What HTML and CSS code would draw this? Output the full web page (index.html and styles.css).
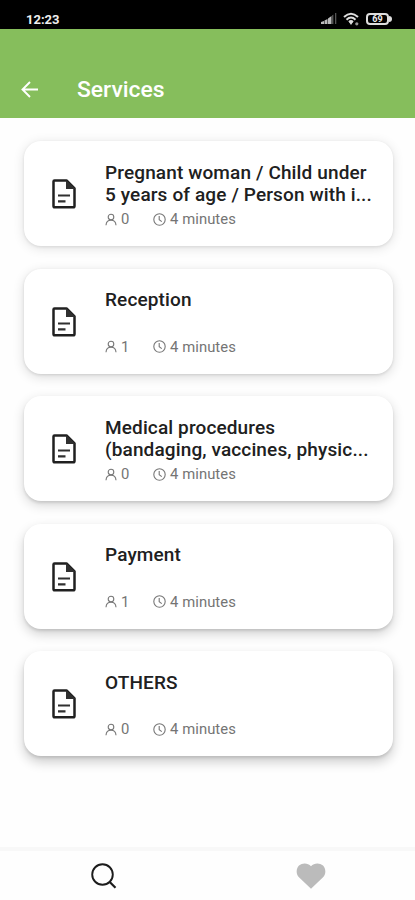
FILE: index.html
```html
<!DOCTYPE html>
<html lang="en">
<head>
<meta charset="utf-8">
<meta name="viewport" content="width=device-width, initial-scale=1">
<title>Services</title>
<link rel="stylesheet" href="styles.css">
</head>
<body>
<svg class="defs" aria-hidden="true">
  <symbol id="doc" viewBox="0 0 24 30">
    <path d="M2.5 1.5H14.5L22.5 9.5V27Q22.5 28.3 21.2 28.3H2.8Q1.5 28.3 1.5 27V2.5Q1.5 1.5 2.5 1.5Z" fill="none" stroke="#202020" stroke-width="2.5" stroke-linejoin="round"/>
    <path d="M14 1L23.5 10H14Z" fill="#303030"/>
    <path d="M6 16.5H18M6 22.3H13.5" stroke="#303030" stroke-width="2.2"/>
  </symbol>
  <symbol id="person" viewBox="0 0 12 13">
    <circle cx="6" cy="4" r="2.8"/>
    <path d="M1 12.2C1.2 9.2 3.2 7.3 6 7.3S10.8 9.2 11 12.2"/>
  </symbol>
  <symbol id="clock" viewBox="0 0 13 13">
    <circle cx="6.5" cy="6.5" r="5.7"/>
    <path d="M6.2 3V6.8L8.8 8.6"/>
  </symbol>
</svg>
<div class="status">
  <span class="time">12:23</span>
  <span class="indicators">
    <svg class="signal" viewBox="0 0 16 13"><path d="M0 12V10L3 9V12ZM3.5 12V8.5L6.5 7V12ZM7 12V6.5L10.5 4V12Z" fill="#bbb"/><path d="M11 12V3.5L12.4 2.5V12ZM14 12V1H15.3V12Z" fill="#555"/></svg>
    <svg class="wifi" viewBox="0 0 17 14"><path d="M1 5Q8 -1.5 15 5M3.5 7.7Q8 3.4 12.5 7.7M6 10Q8 8 10 10" fill="none" stroke="#ddd" stroke-width="2"/><path d="M6 10H10L8 13Z" fill="#ddd"/><circle cx="13.8" cy="11.8" r="1.6" fill="#999"/></svg>
    <span class="battery"><span class="level">69</span><i class="tip"></i></span>
  </span>
</div>
<header class="bar">
  <svg class="back" viewBox="0 0 18 17"><path d="M17 8.5H1.5M9 1L1.5 8.5L9 16" fill="none" stroke="#fff" stroke-width="1.9"/></svg>
  <h1>Services</h1>
</header>
<main class="list">
  <article class="card s1">
    <svg class="doc"><use href="#doc"/></svg>
    <div class="body"><h2>Pregnant woman / Child under<br>5 years of age / Person with i...</h2>
      <div class="meta"><svg class="person"><use href="#person"/></svg><span class="count">0</span><svg class="clock"><use href="#clock"/></svg><span>4 minutes</span></div></div>
  </article>
  <article class="card s2">
    <svg class="doc"><use href="#doc"/></svg>
    <div class="body"><h2>Reception</h2>
      <div class="meta"><svg class="person"><use href="#person"/></svg><span class="count">1</span><svg class="clock"><use href="#clock"/></svg><span>4 minutes</span></div></div>
  </article>
  <article class="card s3">
    <svg class="doc"><use href="#doc"/></svg>
    <div class="body"><h2>Medical procedures<br>(bandaging, vaccines, physic...</h2>
      <div class="meta"><svg class="person"><use href="#person"/></svg><span class="count">0</span><svg class="clock"><use href="#clock"/></svg><span>4 minutes</span></div></div>
  </article>
  <article class="card s4">
    <svg class="doc"><use href="#doc"/></svg>
    <div class="body"><h2>Payment</h2>
      <div class="meta"><svg class="person"><use href="#person"/></svg><span class="count">1</span><svg class="clock"><use href="#clock"/></svg><span>4 minutes</span></div></div>
  </article>
  <article class="card s5">
    <svg class="doc"><use href="#doc"/></svg>
    <div class="body"><h2>OTHERS</h2>
      <div class="meta"><svg class="person"><use href="#person"/></svg><span class="count">0</span><svg class="clock"><use href="#clock"/></svg><span>4 minutes</span></div></div>
  </article>
</main>
<nav class="tabs">
  <svg class="search" viewBox="0 0 26 26"><circle cx="11.5" cy="11.5" r="10.3" fill="none" stroke="#1c1c1c" stroke-width="1.9"/><path d="M18.5 18.8L24.5 24.8" stroke="#1c1c1c" stroke-width="2.2"/></svg>
  <svg class="heart" viewBox="0 0 30 26"><path d="M15 25.8L3.2 14.6C-.3 11.2 0 5.5 3 2.6C6.3-.5 11.8-.4 15 3.2C18.2-.4 23.7-.5 27 2.6C30 5.5 30.3 11.2 26.8 14.6Z" fill="#bbb"/></svg>
</nav>
</body>
</html>
```

FILE: styles.css
```css
* { box-sizing: border-box; }
body {
  margin: 0;
  height: 900px;
  display: flex;
  flex-direction: column;
  overflow: hidden;
  background: #fefefe;
  font-family: Roboto, "Liberation Sans", sans-serif;
  color: #202020;
}
svg { display: block; flex: none; }
.defs { display: none; }
.status {
  height: 29px;
  flex: none;
  display: flex;
  justify-content: space-between;
  padding: 12px 23px 0 26px;
  background: #000;
  color: #eee;
}
.time { font-size: 13px; line-height: 15px; font-weight: 700; }
.indicators { display: flex; gap: 6px; height: 14px; }
.signal { width: 16px; height: 13px; }
.wifi { width: 17px; height: 14px; }
.battery { display: flex; align-items: center; height: 13px; }
.level {
  width: 23px;
  height: 12px;
  border: 2px solid #ddd;
  border-radius: 4px;
  font-size: 9px;
  line-height: 9px;
  font-weight: 700;
  text-align: center;
}
.tip { width: 3px; height: 6px; border-radius: 0 3px 3px 0; background: #ddd; }
.bar {
  height: 89px;
  flex: none;
  display: flex;
  align-items: center;
  padding: 32px 21px 0;
  background: #86be5c;
}
.back { width: 18px; height: 17px; margin-right: 38px; }
h1 { margin: 1px 0 0; font-size: 22.9px; line-height: 28px; font-weight: 500; color: #fff; }
.list {
  flex: 1;
  display: flex;
  flex-direction: column;
  gap: 22.6px;
  padding: 23px 22.5px 0 23.5px;
}
.card {
  height: 105px;
  flex: none;
  display: flex;
  padding: 20.5px 0 0 28.5px;
  border-radius: 17px;
  background: #fff;
}
.s1 { box-shadow: 0 2px 12px rgba(0,0,0,.12), 0 1px 3px rgba(0,0,0,.09); }
.s2 { box-shadow: 0 3px 12px rgba(0,0,0,.14), 0 1px 3px rgba(0,0,0,.11); }
.s3 { box-shadow: 0 4px 12px rgba(0,0,0,.16), 0 2px 3px rgba(0,0,0,.11); }
.s4 { box-shadow: 0 5px 12px rgba(0,0,0,.18), 0 2px 3px rgba(0,0,0,.11); }
.s5 { box-shadow: 0 6px 12px rgba(0,0,0,.2), 0 2px 3px rgba(0,0,0,.11); }
.doc { width: 24px; height: 30px; margin: 17.5px 29px 0 0; }
.body { flex: 1; }
h2 {
  margin: 0;
  height: 46.5px;
  font-size: 19px;
  line-height: 22.5px;
  font-weight: 500;
  letter-spacing: .13px;
  white-space: nowrap;
}
.meta {
  display: flex;
  align-items: center;
  height: 22px;
  font-size: 14.8px;
  line-height: 22px;
  letter-spacing: .08px;
  color: #747474;
}
.person, .clock { fill: none; stroke: #777; stroke-width: 1.1; }
.person { width: 12px; height: 13px; margin-right: 4px; }
.clock { width: 13px; height: 13px; margin-right: 4px; }
.count { width: 32px; }
.tabs {
  height: 53px;
  flex: none;
  display: grid;
  grid-template-columns: 1fr 1fr;
  justify-items: center;
  border-top: 4px solid #f8f8f8;
  padding-top: 12px;
  background: #fefefe;
}
.search { width: 26px; height: 26px; }
.heart { width: 30px; height: 26px; }
```
